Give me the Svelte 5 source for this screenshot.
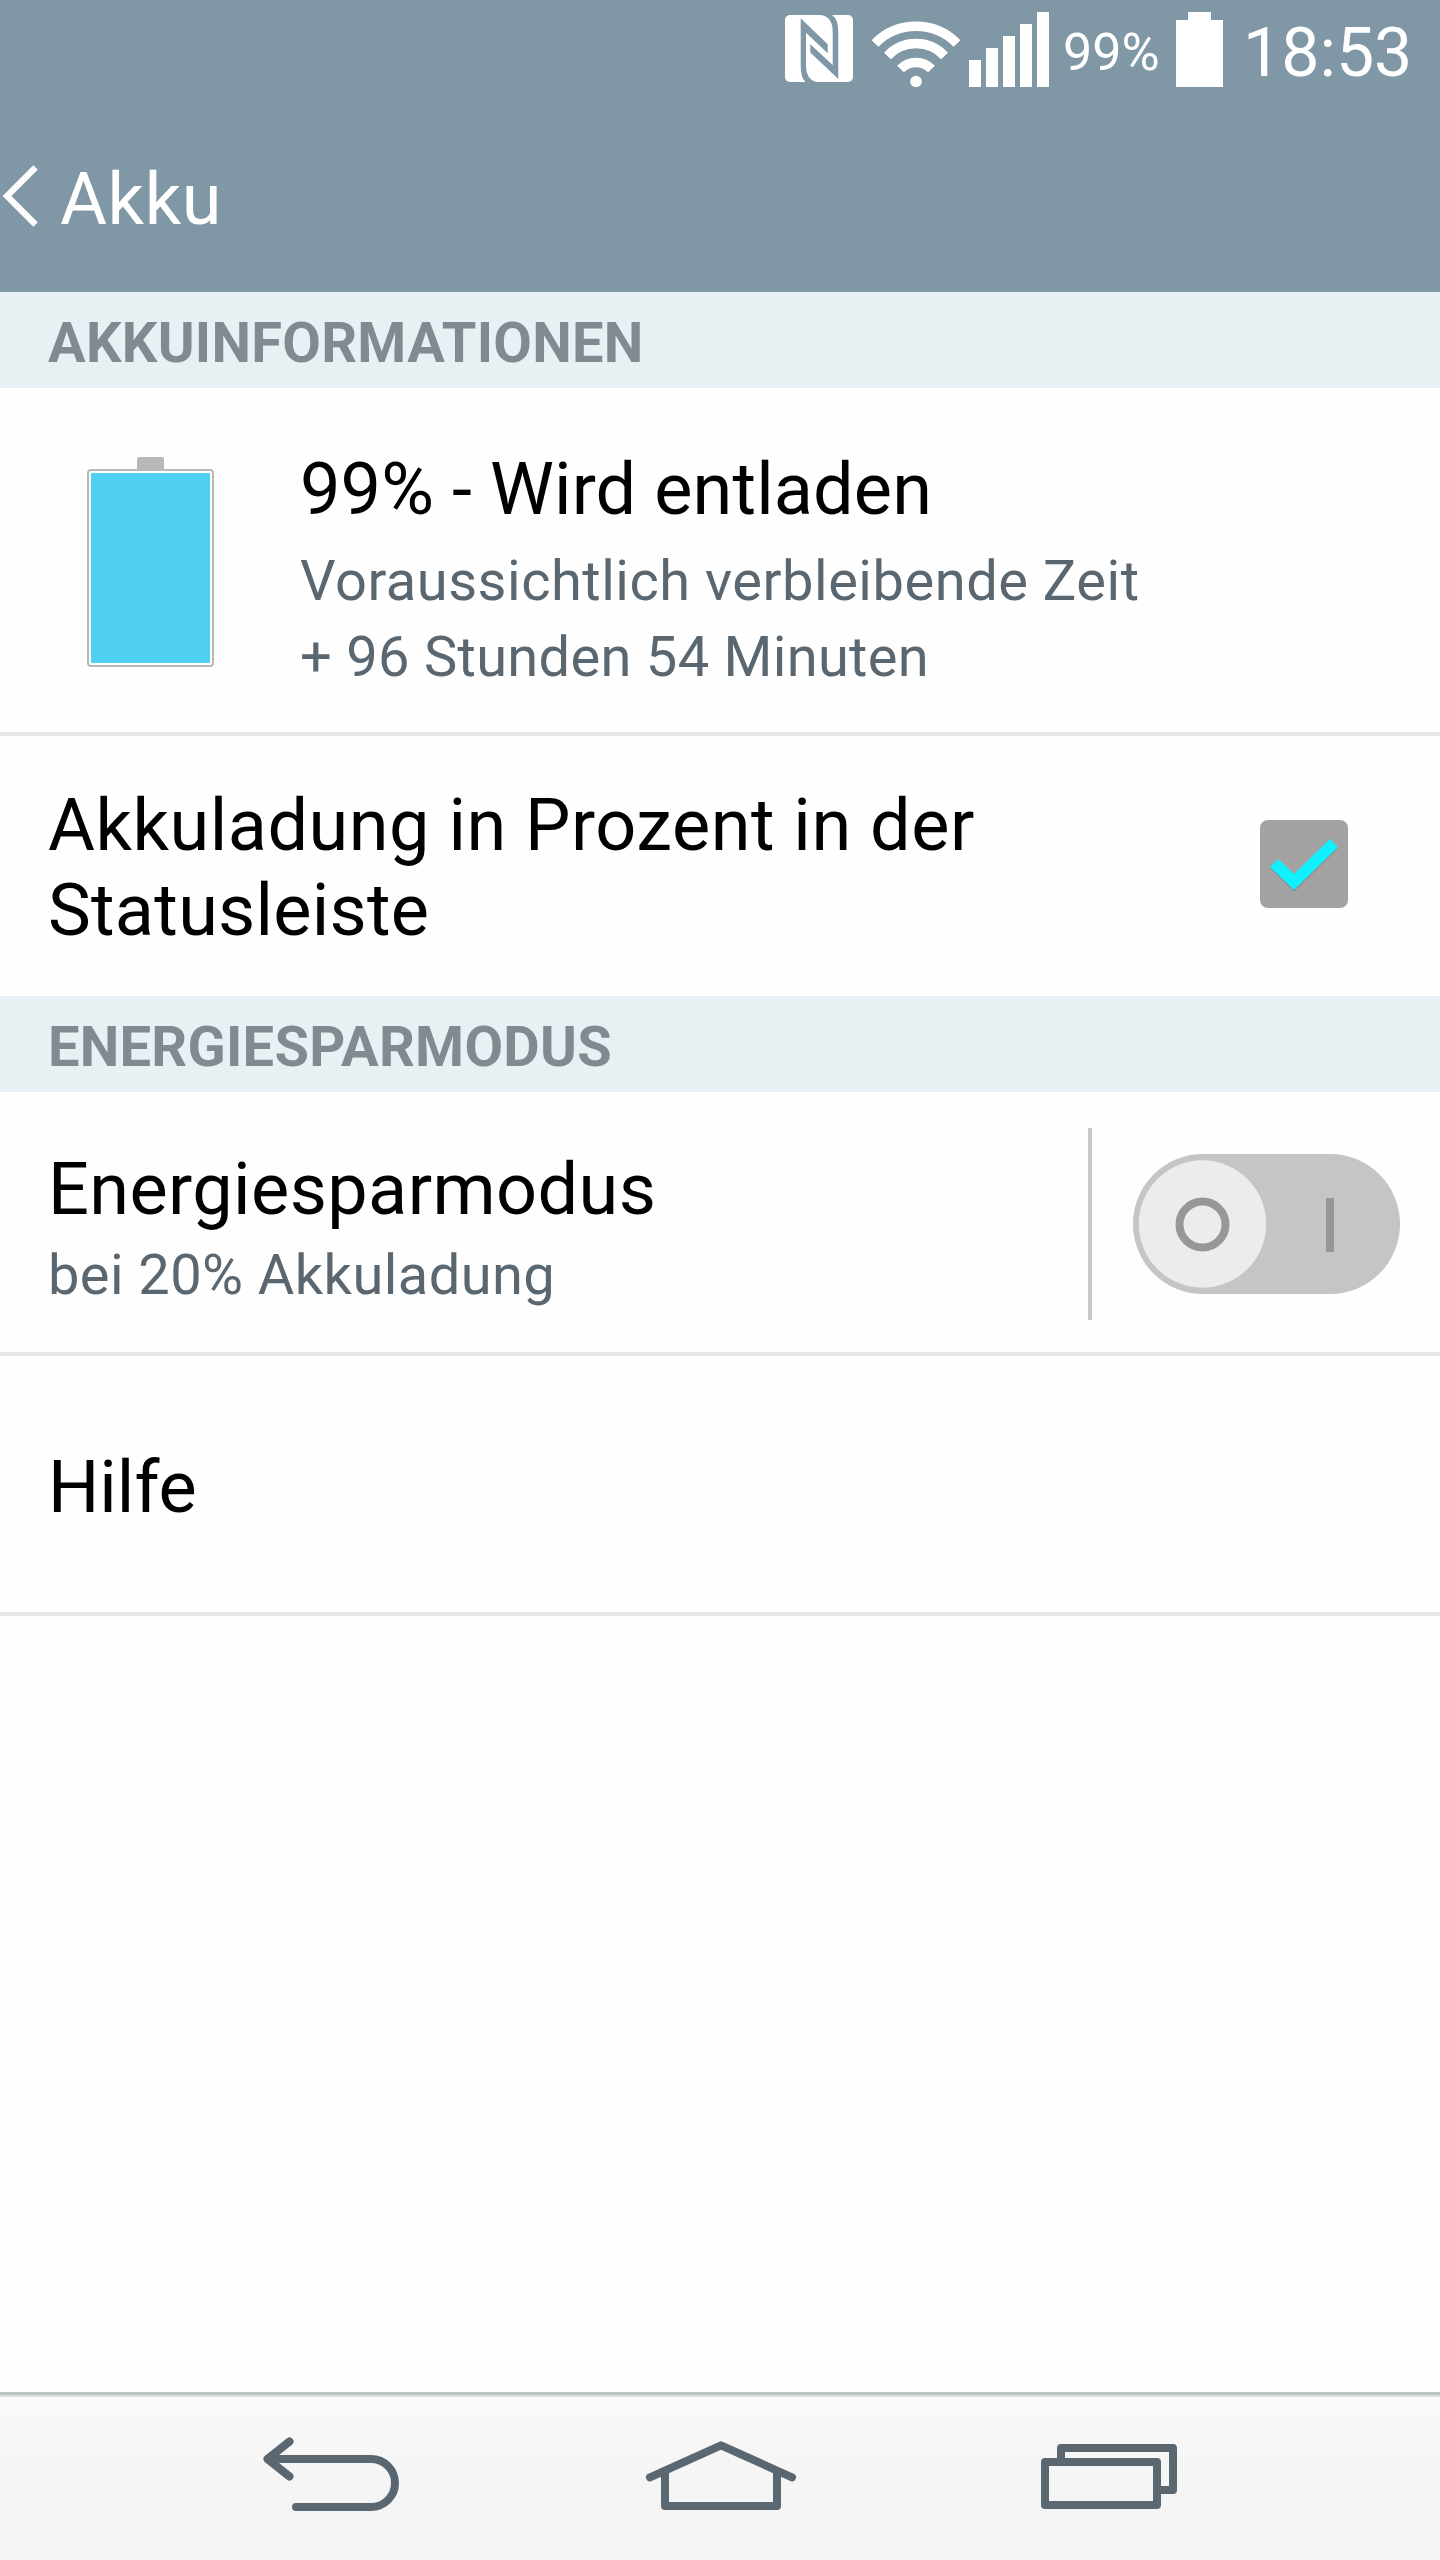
<script>
  const signalBars = [27, 39, 51, 63, 75];
</script>

<div class="screen">
  <header class="top">
    <div class="status">
      <svg class="nfc" width="68" height="67" viewBox="0 0 68 67">
        <rect width="68" height="67" rx="5" fill="#fff" />
        <path fill="#8097a5" d="M15.700 3.300L42.700 29.300V38.300L21 17.700V51Q21 64 31 67H20.500Q15.700 63 15.700 50Z" />
        <path fill="#8097a5" d="M53.300 64L25.300 37.500V29.300L47.700 50V17Q47.700 2 36 0H47Q53.300 4 53.300 18Z" />
      </svg>
      <svg class="wifi" width="90" height="70" viewBox="0 0 90 70">
        <g fill="none" stroke="#fff" stroke-width="9.500">
          <path d="M4 23.500A57.500 57.500 0 0 1 86 23.500" />
          <path d="M16.500 36A39 39 0 0 1 73.500 36" />
          <path d="M29.500 49A21.500 21.500 0 0 1 60.500 49" />
        </g>
        <circle cx="45" cy="61.500" r="5.800" fill="#fff" />
      </svg>
      <svg class="signal" width="80" height="75" viewBox="0 0 80 75">
        {#each signalBars as h, i}
          <rect x={i * 17} y={75 - h} width="12" height={h} fill="#fff" />
        {/each}
      </svg>
      <span class="percent">99%</span>
      <svg class="cell" width="47" height="75" viewBox="0 0 47 75">
        <path fill="#fff" d="M12 0H35V8H47V75H0V8H12Z" />
      </svg>
      <span class="clock">18:53</span>
    </div>
    <div class="titlebar">
      <svg class="chevron" width="40" height="62" viewBox="0 0 40 62">
        <path d="M35.500 2.500L7 31L35.500 59.500" fill="none" stroke="#fff" stroke-width="6.200" />
      </svg>
      <h1>Akku</h1>
    </div>
  </header>

  <main>
    <h2>AKKUINFORMATIONEN</h2>
    <section class="row info">
      <svg class="battery" width="127" height="210" viewBox="0 0 127 210">
        <path d="M50 13V2Q50 0 52 0H75Q77 0 77 2V13Z" fill="#b8b8b8" />
        <rect x="1" y="13" width="125" height="196" rx="3" fill="#fff" stroke="#b8b8b8" stroke-width="2" />
        <rect x="4" y="16" width="119" height="190" fill="#50d0f0" />
      </svg>
      <div class="copy">
        <div class="title">99% - Wird entladen</div>
        <div class="sub"><span class="estimate">Voraussichtlich verbleibende Zeit</span><br />+ 96 Stunden 54 Minuten</div>
      </div>
    </section>
    <section class="row option">
      <div class="title"><span class="lead">Akkuladung in Prozent in der</span><br />Statusleiste</div>
      <svg class="check" width="88" height="88" viewBox="0 0 88 88">
        <rect width="88" height="88" rx="8" fill="#a2a2a2" />
        <path d="M10 48L18.500 40L34 55L70 20L78 28L34 71.500Z" fill="#777" opacity=".6" />
        <path d="M10 47L18.500 39L34 54L70 19L78 27L34 70Z" fill="#10f0ff" />
      </svg>
    </section>
    <h2>ENERGIESPARMODUS</h2>
    <section class="row saver">
      <div class="copy">
        <div class="title">Energiesparmodus</div>
        <div class="sub">bei 20% Akkuladung</div>
      </div>
      <div class="divider"></div>
      <svg class="toggle" width="267" height="140" viewBox="0 0 267 140">
        <rect width="267" height="140" rx="70" fill="#c5c5c5" />
        <circle cx="69.500" cy="70" r="63.700" fill="#ececec" />
        <circle cx="69.500" cy="70.500" r="23" fill="none" stroke="#979797" stroke-width="8" />
        <rect x="193" y="44" width="8" height="54" fill="#979797" />
      </svg>
    </section>
    <section class="row help">
      <div class="title">Hilfe</div>
    </section>
  </main>

  <nav>
    <svg class="back" width="138" height="78" viewBox="0 0 138 78">
      <g fill="none" stroke="#5a6770" stroke-width="8" stroke-linecap="round" stroke-linejoin="round">
        <path d="M27.500 7.500L5.500 25L27.500 42.500" />
        <path d="M6 25H109A24 24 0 0 1 109 73H34" />
      </g>
    </svg>
    <svg class="home" width="152" height="71" viewBox="0 0 152 71">
      <g fill="none" stroke="#5a6770" stroke-width="8" stroke-linecap="round" stroke-linejoin="round">
        <path d="M5 37.300L76 5.300L147 37.300M20 31V66H132V31" />
      </g>
    </svg>
    <svg class="recents" width="136" height="65" viewBox="0 0 136 65">
      <g fill="none" stroke="#5a6770" stroke-width="8" stroke-linejoin="round">
        <path d="M20 15V4H132V46H119" />
        <rect x="4" y="18" width="112" height="43" />
      </g>
    </svg>
  </nav>
</div>

<style>
  :global(body) { margin: 0; background: #fefefe; }
  .screen {
    width: 1440px;
    height: 2560px;
    display: flex;
    flex-direction: column;
    background: #fefefe;
    font-family: Roboto, sans-serif;
    overflow: hidden;
  }
  svg { display: block; flex: none; }
  .top { height: 292px; flex: none; background: #8097a5; color: #fff; }
  .status { height: 108px; display: flex; align-items: flex-start; padding-left: 785px; white-space: nowrap; }
  .nfc { margin-top: 15px; }
  .wifi { margin: 20px 0 0 18px; }
  .signal { margin: 12px 0 0 8px; }
  .percent { width: 96px; margin: 22px 0 0 14px; font-size: 52px; line-height: 62px; }
  .cell { margin: 12px 0 0 17px; }
  .clock { margin: 13px 0 0 20px; font-size: 68px; line-height: 80px; }
  .titlebar { height: 184px; display: flex; align-items: flex-start; }
  .chevron { margin-top: 57px; }
  h1 { margin: 49px 0 0 20px; font-size: 72px; line-height: 85px; font-weight: 400; letter-spacing: 0.6px; }
  main { flex: 1; }
  h2 {
    margin: 0;
    height: 96px;
    box-sizing: border-box;
    padding: 2px 0 0 48px;
    background: #e8f0f4;
    color: #7f8b91;
    font-size: 56px;
    line-height: 98px;
    font-weight: 700;
    letter-spacing: 0.28px;
  }
  .row { display: flex; box-sizing: border-box; white-space: nowrap; }
  .title { font-size: 72px; line-height: 85px; color: #000; }
  .sub { font-size: 56px; line-height: 76px; color: #5a6770; }
  .info { height: 348px; padding: 59px 0 0 87px; border-bottom: 4px solid #e5e5e5; }
  .info .battery { margin: 10px 86px 0 0; }
  .info .title { letter-spacing: 0.13px; }
  .info .sub { margin-top: 11px; letter-spacing: 0.3px; }
  .estimate { letter-spacing: 0.52px; }
  .option { height: 260px; padding: 47px 92px 0 48px; justify-content: space-between; }
  .option .title { letter-spacing: 0.28px; }
  .option .lead { letter-spacing: 0.52px; }
  .check { margin-top: 37px; }
  .saver { height: 264px; padding: 0 40px 0 48px; border-bottom: 4px solid #e5e5e5; }
  .saver .copy { flex: 1; padding-top: 55px; letter-spacing: 0.42px; }
  .saver .sub { margin-top: 5px; }
  .divider { width: 4px; height: 192px; margin: 36px 41px 0 0; background: #c5c9ce; }
  .toggle { margin-top: 62px; }
  .help { height: 260px; padding: 89px 0 0 48px; border-bottom: 4px solid #e5e5e5; }
  nav {
    height: 168px;
    flex: none;
    box-sizing: border-box;
    display: flex;
    align-items: flex-start;
    padding: 0 263px 0 262px;
    justify-content: space-between;
    border-top: 3px solid #bcc4c5;
    background: linear-gradient(#dde0e1 0 1.5px, #fdfdfd 2px 4px, #f9f9f9 5px, #f4f4f4 60%);
  }
  .back { margin-top: 39px; }
  .home { margin-top: 45px; }
  .recents { margin-top: 49px; }
</style>
